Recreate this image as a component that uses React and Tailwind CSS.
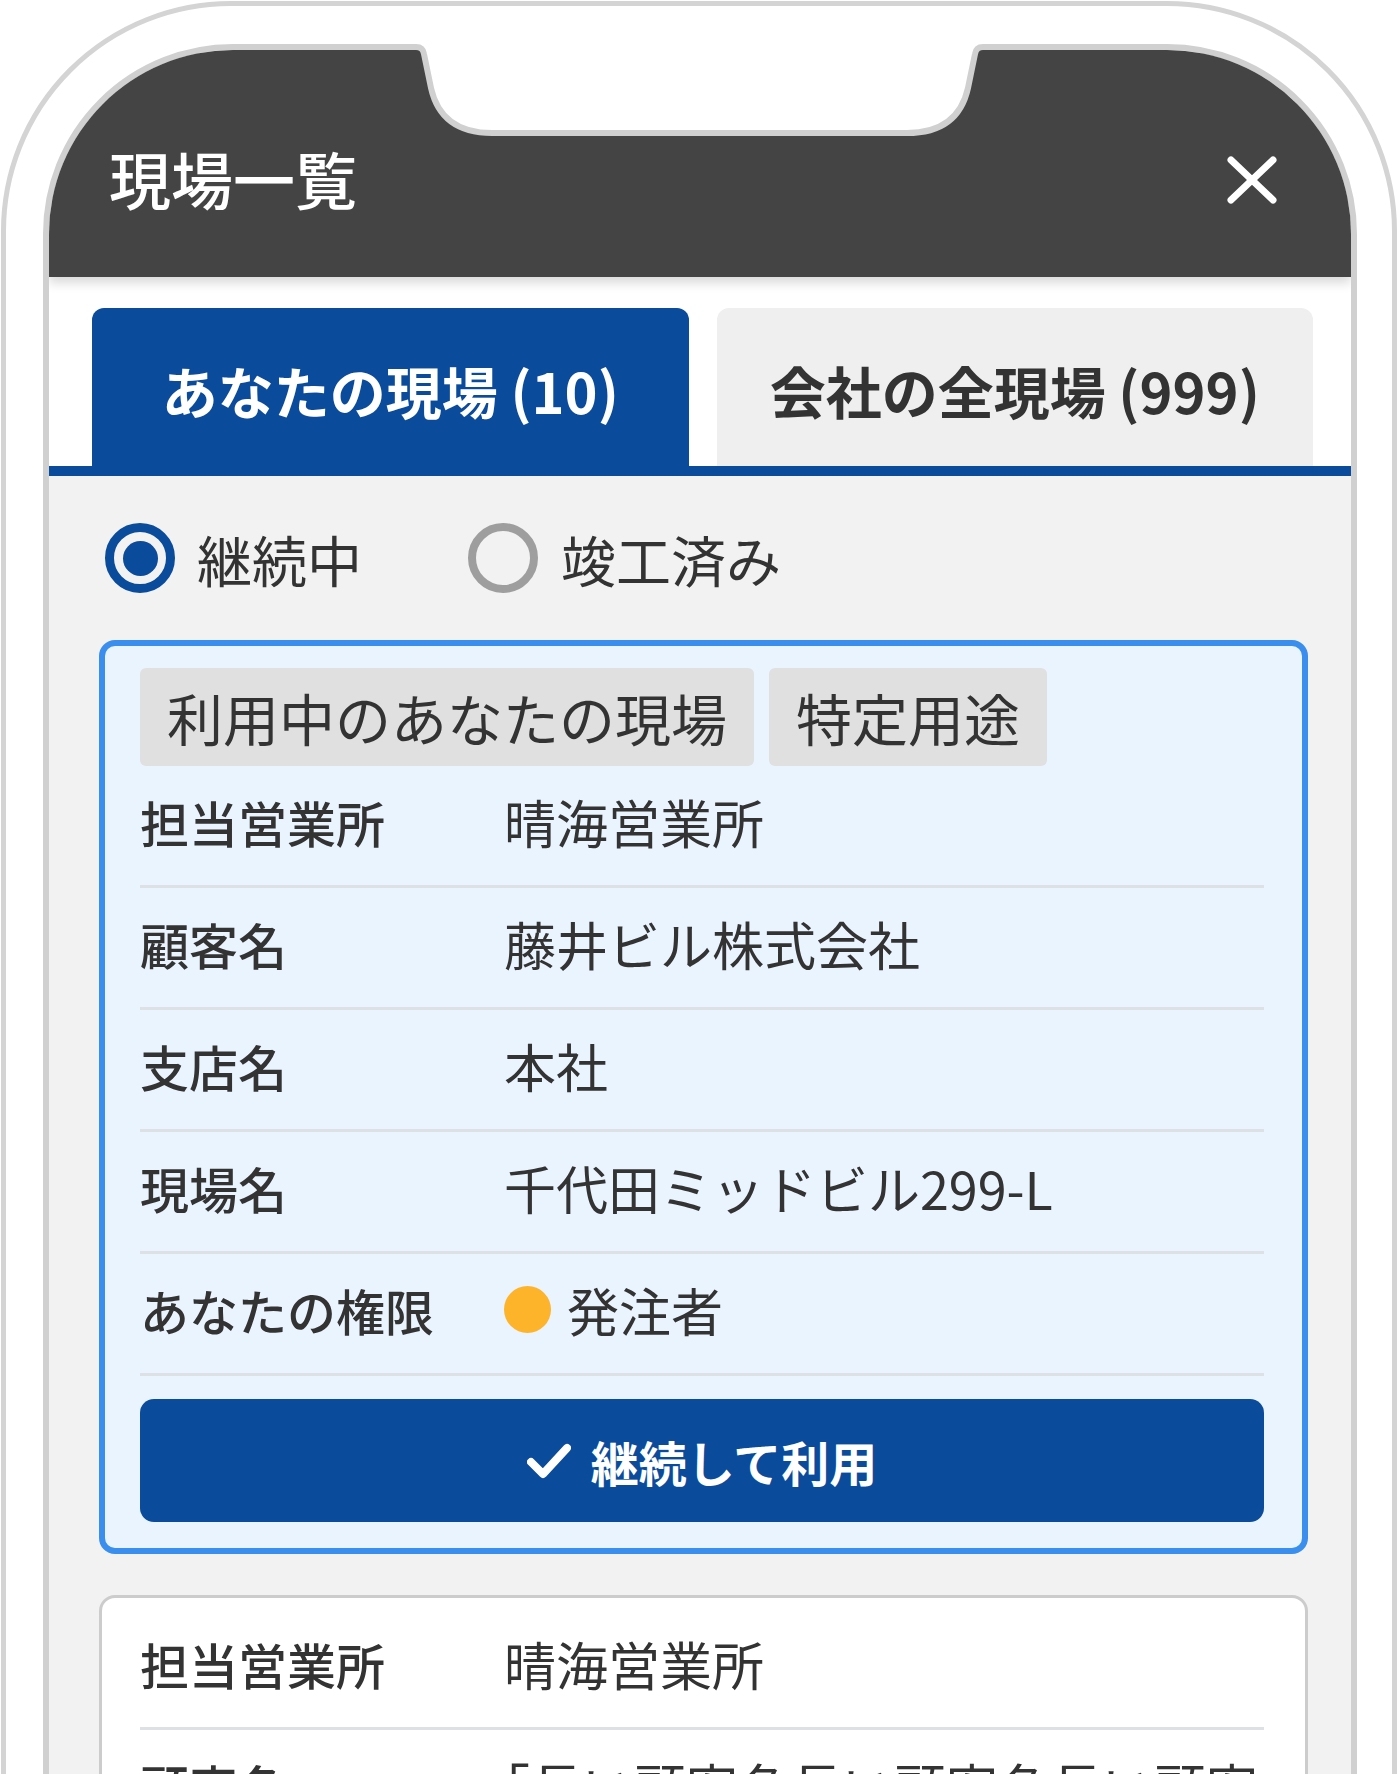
import React from "react";

function Row({ label, children }) {
  return (
    <div className="flex items-start pt-[16px] pb-[24px] border-b-[3px] border-[#dde1e4]">
      <div className="w-[364px] shrink-0 text-[49px] font-medium text-[#333] leading-[79px]">{label}</div>
      <div className="flex-1 min-w-0 text-[52px] text-[#333] leading-[79px]">{children}</div>
    </div>
  );
}

function CloseIcon() {
  return (
    <svg width="50" height="48" viewBox="0 0 50 48" fill="none">
      <line x1="4" y1="4" x2="46" y2="44" stroke="white" strokeWidth="7" strokeLinecap="round" />
      <line x1="46" y1="4" x2="4" y2="44" stroke="white" strokeWidth="7" strokeLinecap="round" />
    </svg>
  );
}

function Check() {
  return (
    <svg width="44" height="36" viewBox="0 0 44 36" fill="none">
      <path d="M4 19 L16 31 L40 5" stroke="white" strokeWidth="8" strokeLinecap="round" strokeLinejoin="round" />
    </svg>
  );
}

export default function App() {
  return (
    <div className="w-[1398px] h-[1774px] overflow-hidden bg-white font-['Noto_Sans_CJK_JP','Noto_Sans',sans-serif]">
      <div className="relative ml-[1px] mt-[1px] w-[1396px] border-[5px] border-[#d4d4d4] rounded-[230px] pt-[38px] pl-[37px] pr-[35px] pb-[40px] bg-white">
        <div className="border-[6px] border-[#d0d0d0] rounded-[190px] overflow-hidden bg-white">
          {/* Header */}
          <div className="relative z-10 bg-[#444444] h-[227px] shadow-[0_6px_10px_rgba(0,0,0,0.15)] flex items-start justify-between pt-[83px] pl-[60px] pr-[74px]">
            <div className="text-[62px] font-medium text-white leading-[90px]">現場一覧</div>
            <div className="h-[90px] flex items-center pt-[4px]">
              <CloseIcon />
            </div>
          </div>

          {/* Tabs */}
          <div className="bg-white pt-[31px] pl-[43px] pr-[38px] flex gap-[28px] border-b-[10px] border-[#0a4b9b]">
            <div className="flex-1 h-[158px] rounded-t-[12px] bg-[#0a4b9b] flex items-center justify-center pt-[6px] text-[56px] font-bold text-white">
              あなたの現場 (10)
            </div>
            <div className="flex-1 h-[158px] rounded-t-[12px] bg-[#efefef] flex items-center justify-center pt-[6px] text-[56px] font-bold text-[#333]">
              会社の全現場 (999)
            </div>
          </div>

          {/* Content */}
          <div className="bg-[#f2f2f2] pt-[47px] pl-[50px] pr-[43px] pb-[200px]">
            <div className="flex items-center ml-[6px] h-[70px]">
              <div className="flex items-center gap-[22px]">
                <span className="w-[70px] h-[70px] rounded-full border-[9px] border-[#0a4b9b] flex items-center justify-center">
                  <span className="w-[35px] h-[35px] rounded-full bg-[#0a4b9b]" />
                </span>
                <span className="text-[55px] text-[#333] leading-[70px]">継続中</span>
              </div>
              <div className="ml-[106px] flex items-center gap-[23px]">
                <span className="w-[70px] h-[70px] rounded-full border-[8px] border-[#9e9e9e]" />
                <span className="text-[55px] text-[#333] leading-[70px]">竣工済み</span>
              </div>
            </div>

            {/* Card 1 */}
            <div className="mt-[47px] rounded-[16px] border-[6px] border-[#3a8eed] bg-[#eaf4fe] pt-[22px] pl-[35px] pr-[38px] pb-[26px]">
              <div className="flex gap-[15px]">
                <div className="h-[98px] px-[27px] rounded-[6px] bg-[#e0e0e0] text-[56px] leading-[98px] text-[#333]">利用中のあなたの現場</div>
                <div className="h-[98px] px-[27px] rounded-[6px] bg-[#e0e0e0] text-[56px] leading-[98px] text-[#333]">特定用途</div>
              </div>
              <Row label="担当営業所">晴海営業所</Row>
              <Row label="顧客名">藤井ビル株式会社</Row>
              <Row label="支店名">本社</Row>
              <Row label="現場名">千代田ミッドビル299-L</Row>
              <Row label="あなたの権限">
                <span className="flex items-center gap-[16px] h-[79px]">
                  <span className="w-[47px] h-[47px] rounded-full bg-[#fdb42b] shrink-0" />
                  <span>発注者</span>
                </span>
              </Row>
              <button className="mt-[23px] w-full h-[123px] rounded-[14px] bg-[#0a4b9b] text-white text-[48px] font-bold flex items-center justify-center gap-[20px]">
                <Check />
                <span>継続して利用</span>
              </button>
            </div>

            {/* Card 2 */}
            <div className="mt-[41px] rounded-[16px] border-[3px] border-[#cccccc] bg-white pt-[10px] pl-[38px] pr-[41px] pb-[23px]">
              <Row label="担当営業所">晴海営業所</Row>
              <Row label="顧客名">
                <span className="inline-block ml-[-26px]">「</span>長い顧客名長い顧客名長い顧客名長い顧客名」
              </Row>
              <Row label="支店名">本社</Row>
              <Row label="現場名">千代田ミッドビル299-L</Row>
            </div>
          </div>
        </div>

        {/* Notch */}
        <svg className="absolute left-[-6px] top-[-6px] z-20" width="1398" height="160" viewBox="0 0 1398 160" fill="none">
          <path
            d="M395 30 L395 47 L416 47 Q423 47 424 54 L431 88 Q441 133 492 133 L907 133 Q958 133 968 88 L975 54 Q976 47 983 47 L1004 47 L1004 30 Z"
            fill="white"
          />
          <path
            d="M395 47 L416 47 Q423 47 424 54 L431 88 Q441 133 492 133 L907 133 Q958 133 968 88 L975 54 Q976 47 983 47 L1004 47"
            stroke="#d0d0d0"
            strokeWidth="6"
            fill="none"
          />
        </svg>
      </div>
    </div>
  );
}
